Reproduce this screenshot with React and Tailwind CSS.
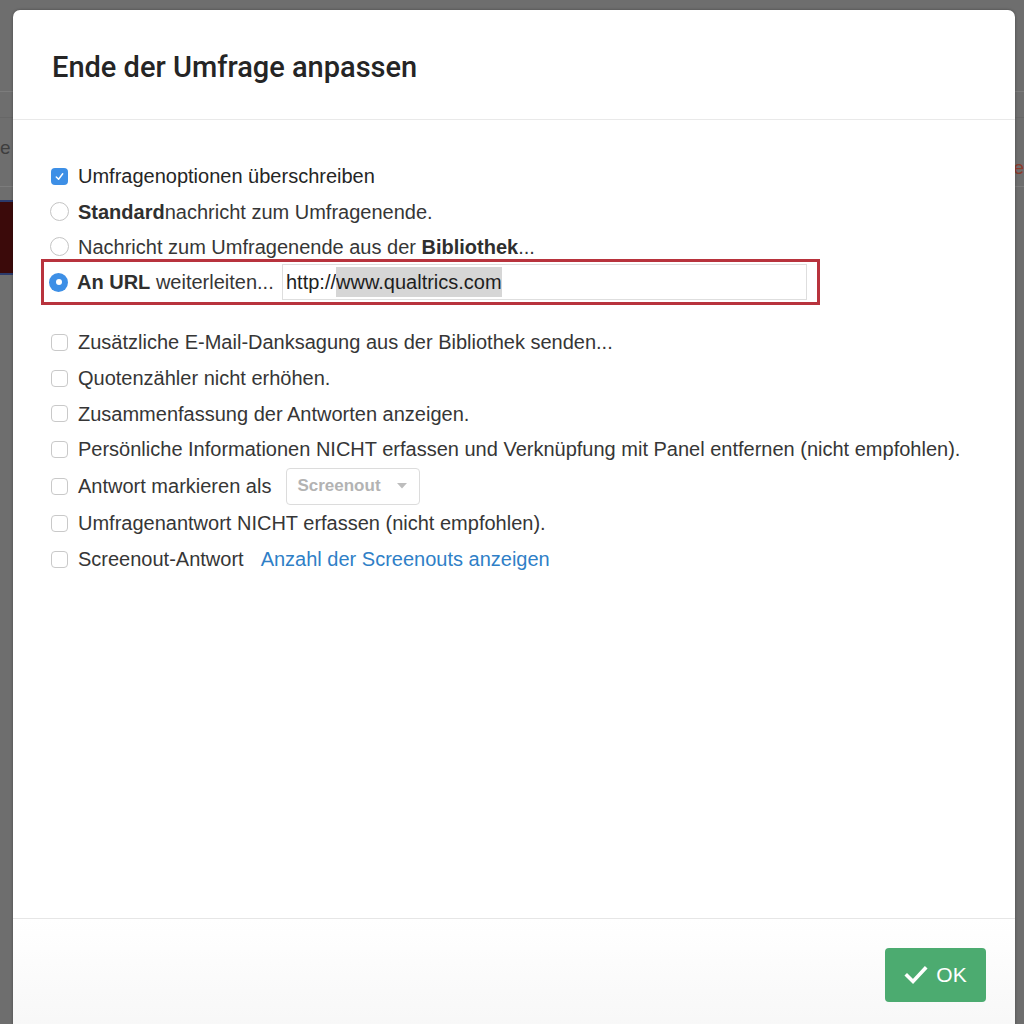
import React from "react";

const font = { fontFamily: '"Liberation Sans", Arial, sans-serif' };

function Checkbox({ checked }) {
  if (checked) {
    return (
      <span className="flex h-[17px] w-[17px] shrink-0 items-center justify-center rounded-[4px] bg-[#3d8fe6]">
        <svg width="11" height="11" viewBox="0 0 12 12" fill="none">
          <path d="M2.5 6.5 L5 9 L9.5 3" stroke="white" strokeWidth="1.6" strokeLinecap="round" strokeLinejoin="round" />
        </svg>
      </span>
    );
  }
  return <span className="h-[17px] w-[17px] shrink-0 rounded-[4px] border border-[#c9c9c9] bg-white" />;
}

function Radio({ checked }) {
  if (checked) {
    return (
      <span className="flex h-[19px] w-[19px] shrink-0 items-center justify-center rounded-full bg-[#3d8fe6]">
        <span className="h-[6px] w-[6px] rounded-full bg-white" />
      </span>
    );
  }
  return <span className="h-[19px] w-[19px] shrink-0 rounded-full border border-[#c4c4c4] bg-white" />;
}

function CheckRow({ children, h = "h-[36px]", checked = false }) {
  return (
    <div className={`flex ${h} items-center gap-[10px]`}>
      <Checkbox checked={checked} />
      <div className="flex items-center">{children}</div>
    </div>
  );
}

function RadioRow({ children }) {
  return (
    <div className="flex h-[35px] items-center gap-[9px] -ml-[1px]">
      <Radio />
      <span>{children}</span>
    </div>
  );
}

export default function App() {
  return (
    <div className="relative h-screen w-full overflow-hidden bg-[#6e6e6e]" style={font}>
      {/* page behind the overlay */}
      <div className="flex flex-col">
        <div className="h-[92px] border-b border-[#7c7c7c]" />
        <div className="h-[26px] border-b border-[#676767]" />
        <div className="flex h-[69px] items-center justify-between border-b border-[#7c7c7c] text-[19px]">
          <span className="-mt-[8px] text-[#3e3e3e]">e</span>
          <span className="mt-[32px] text-[#8b3b2c]">e</span>
        </div>
        <div className="mt-[13px] h-[75px] w-[20px] border-y-2 border-[#2b3a6b] bg-[#3b0a0a]" />
      </div>

      {/* modal */}
      <div className="absolute left-[13px] top-[10px] bottom-[-10px] flex w-[1002px] flex-col rounded-t-[7px] bg-white shadow-[0_0_3px_rgba(0,0,0,0.35)]">
        <div className="flex h-[110px] shrink-0 items-center border-b border-[#e9e9e9] pl-[39px] pt-[6px]">
          <h3 className="text-[29px] font-medium text-[#252525]" style={{ fontFamily: 'Roboto, "Liberation Sans", sans-serif' }}>
            Ende der Umfrage anpassen
          </h3>
        </div>

        <div className="flex flex-1 flex-col px-[38px] pt-[38px] text-[20px] text-[#363636]">
          <CheckRow checked>
            <span className="text-[#252525]">Umfragenoptionen überschreiben</span>
          </CheckRow>
          <RadioRow>
            <b className="font-bold text-[#2f2f2f]">Standard</b>nachricht zum Umfragenende.
          </RadioRow>
          <RadioRow>
            Nachricht zum Umfragenende aus der <b className="font-bold text-[#2f2f2f]">Bibliothek</b>...
          </RadioRow>

          <div className="-ml-[10px] -mt-[5px] flex h-[46px] w-[779px] items-center border-[3px] border-[#b8333d] pl-[5px]">
            <Radio checked />
            <span className="ml-[9px] w-[205px] shrink-0">
              <b className="font-bold text-[#2f2f2f]">An URL</b> weiterleiten...
            </span>
            <div className="flex h-[36px] w-[525px] items-center border border-[#dedede] pl-[3px] text-[#1e1e1e]">
              <span>http://</span>
              <span className="bg-[#d6d6d6]">www.qualtrics.com</span>
            </div>
          </div>

          <div className="mt-[19px]" />
          <CheckRow>Zusätzliche E-Mail-Danksagung aus der Bibliothek senden...</CheckRow>
          <CheckRow>Quotenzähler nicht erhöhen.</CheckRow>
          <CheckRow h="h-[35px]">Zusammenfassung der Antworten anzeigen.</CheckRow>
          <CheckRow>Persönliche Informationen NICHT erfassen und Verknüpfung mit Panel entfernen (nicht empfohlen).</CheckRow>
          <CheckRow h="h-[38px]">
            <span>Antwort markieren als</span>
            <div className="ml-[15px] flex h-[37px] w-[134px] items-center justify-between rounded-[4px] border border-[#dcdcdc] pl-[10px] pr-[12px]">
              <span className="text-[17px] font-bold text-[#b3b3b3]">Screenout</span>
              <svg width="10" height="6" viewBox="0 0 10 6">
                <path d="M0 0 H10 L5 5.5 Z" fill="#bdbdbd" />
              </svg>
            </div>
          </CheckRow>
          <CheckRow>Umfragenantwort NICHT erfassen (nicht empfohlen).</CheckRow>
          <CheckRow>
            <span>Screenout-Antwort</span>
            <a className="ml-[17px] text-[#2f7fc7]">Anzahl der Screenouts anzeigen</a>
          </CheckRow>
        </div>

        <div className="flex h-[116px] shrink-0 items-start justify-end border-t border-[#e6e6e6] bg-gradient-to-b from-white to-[#f7f7f7] pr-[29px] pt-[29px]">
          <button className="flex h-[54px] w-[101px] items-center justify-center gap-[8px] rounded-[4px] bg-[#4cab70] text-[21px] text-white">
            <svg width="24" height="20" viewBox="0 0 24 20" fill="none">
              <path d="M3 10.5 L9 16.5 L21 3.5" stroke="white" strokeWidth="3.6" strokeLinecap="square" />
            </svg>
            <span>OK</span>
          </button>
        </div>
      </div>
    </div>
  );
}
